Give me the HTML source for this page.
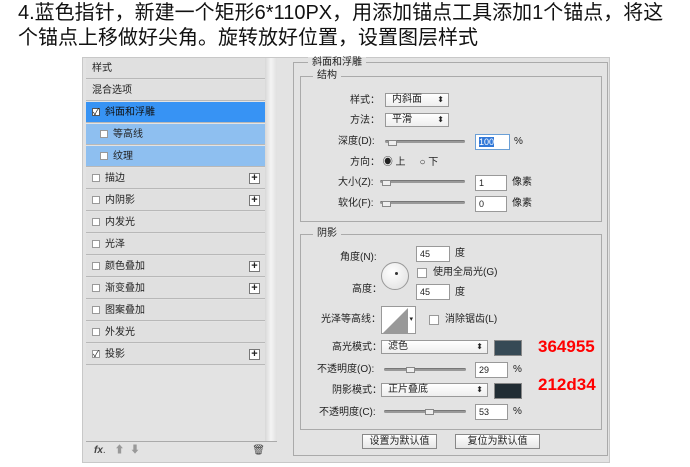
<!DOCTYPE html>
<html><head><meta charset="utf-8"><style>
*{margin:0;padding:0;box-sizing:border-box}
body{width:690px;height:467px;background:#fff;position:relative;overflow:hidden;font-family:"Liberation Sans","Noto Sans CJK SC",sans-serif;font-size:11px;color:#222}
.a{position:absolute;white-space:nowrap}
.h{font-size:20px;color:#111;line-height:22px}
.row{position:absolute;left:86px;width:179px;height:21px;border-bottom:1px solid #b8b8b8;background:#e0e0e0;line-height:21px;padding-left:6px;font-size:10px}
.cb{display:inline-block;width:8px;height:8px;border:1px solid #999;background:#fff;margin-right:5px;vertical-align:-1px;position:relative;overflow:visible}
.cb i{position:absolute;left:0;top:-2px;font-style:normal;font-size:9px;line-height:10px}
.plus{position:absolute;right:5px;top:5px;width:11px;height:11px;border:1px solid #777;background:#fff;font-size:11px;line-height:8px;text-align:center;font-weight:bold}
.box{position:absolute;border:1px solid #aaa}
.lg{position:absolute;background:#e3e3e3;padding:0 4px;font-size:10px;line-height:12px}
.sel{position:absolute;height:14px;border:1px solid #999;background:linear-gradient(#fff,#eee);font-size:10px;line-height:12px;padding-left:6px}
.sel:after{content:"⬍";position:absolute;right:4px;font-size:8px}
.in{position:absolute;height:16px;border:1px solid #999;background:#fff;font-size:9px;line-height:14px;padding-left:3px}
.sl{position:absolute;height:3px;background:#999;border-radius:2px;border-top:1px solid #777}
.k{position:absolute;width:9px;height:6px;background:#eee;border:1px solid #888}
.l{font-size:10px;line-height:12px}
</style></head><body>
<div class="a h" style="left:18px;top:2px">4.蓝色指针，新建一个矩形6*110PX，用添加锚点工具添加1个锚点，将这</div>
<div class="a h" style="left:18px;top:27px">个锚点上移做好尖角。旋转放好位置，设置图层样式</div>

<div class="a" style="left:82px;top:57px;width:528px;height:406px;background:#e3e3e3;border:1px solid #c8c8c8"></div>
<div class="a" style="left:265px;top:58px;width:12px;height:384px;background:linear-gradient(90deg,#d8d8d8,#f4f4f4,#e0e0e0)"></div>
<div class="row" style="top:58px">样式</div>
<div class="row" style="top:80px">混合选项</div>
<div class="row" style="top:102px;background:#3793f4;color:#111"><span class="cb" style="border-color:#555"><i>✓</i></span>斜面和浮雕</div>
<div class="row" style="top:124px;background:#8ebff0;padding-left:14px"><span class="cb"></span>等高线</div>
<div class="row" style="top:146px;background:#8ebff0;padding-left:14px"><span class="cb"></span>纹理</div>
<div class="row" style="top:168px"><span class="cb"></span>描边<span class="plus">+</span></div>
<div class="row" style="top:190px"><span class="cb"></span>内阴影<span class="plus">+</span></div>
<div class="row" style="top:212px"><span class="cb"></span>内发光</div>
<div class="row" style="top:234px"><span class="cb"></span>光泽</div>
<div class="row" style="top:256px"><span class="cb"></span>颜色叠加<span class="plus">+</span></div>
<div class="row" style="top:278px"><span class="cb"></span>渐变叠加<span class="plus">+</span></div>
<div class="row" style="top:300px"><span class="cb"></span>图案叠加</div>
<div class="row" style="top:322px"><span class="cb"></span>外发光</div>
<div class="row" style="top:344px"><span class="cb"><i>✓</i></span>投影<span class="plus">+</span></div>
<div class="a" style="left:86px;top:441px;width:191px;border-top:1px solid #aaa;height:18px;font-size:10px;line-height:17px;padding-left:8px;color:#444"><i><b>fx</b></i>. <span style="color:#999;margin-left:6px">⬆ &nbsp;⬇</span><span style="position:absolute;right:12px">🗑</span></div>

<div class="box" style="left:293px;top:62px;width:315px;height:394px"></div>
<div class="lg" style="left:308px;top:57px">斜面和浮雕</div>
<div class="box" style="left:300px;top:76px;width:302px;height:146px"></div>
<div class="lg" style="left:313px;top:70px">结构</div>
<div class="a l" style="left:350px;top:95px">样式：</div><div class="sel" style="left:385px;top:93px;width:64px">内斜面</div>
<div class="a l" style="left:350px;top:115px">方法：</div><div class="sel" style="left:385px;top:113px;width:64px">平滑</div>
<div class="a l" style="left:338px;top:136px">深度(D):</div><div class="sl" style="left:385px;top:140px;width:80px"></div><div class="k" style="left:388px;top:140px"></div>
<div class="in" style="left:475px;top:134px;width:35px;border-color:#6a9fd6"><span style="background:#3178d8;color:#fff">100</span></div><div class="a l" style="left:514px;top:136px">%</div>
<div class="a l" style="left:350px;top:157px">方向： ◉ 上 &nbsp;&nbsp;&nbsp;&nbsp;○ 下</div>
<div class="a l" style="left:338px;top:177px">大小(Z):</div><div class="sl" style="left:380px;top:180px;width:85px"></div><div class="k" style="left:382px;top:180px"></div>
<div class="in" style="left:475px;top:175px;width:32px">1</div><div class="a l" style="left:512px;top:177px">像素</div>
<div class="a l" style="left:338px;top:198px">软化(F):</div><div class="sl" style="left:380px;top:201px;width:85px"></div><div class="k" style="left:382px;top:201px"></div>
<div class="in" style="left:475px;top:196px;width:32px">0</div><div class="a l" style="left:512px;top:198px">像素</div>

<div class="box" style="left:300px;top:234px;width:302px;height:196px"></div>
<div class="lg" style="left:313px;top:228px">阴影</div>
<div class="a l" style="left:340px;top:252px">角度(N):</div>
<div class="a" style="left:381px;top:262px;width:28px;height:28px;border-radius:50%;border:1px solid #999;background:radial-gradient(circle at 40% 35%,#fff,#ddd)"></div>
<div class="a" style="left:395px;top:272px;width:3px;height:3px;background:#333;border-radius:50%"></div>
<div class="in" style="left:416px;top:246px;width:34px">45</div><div class="a l" style="left:455px;top:248px">度</div>
<div class="a" style="left:417px;top:268px;width:10px;height:10px;border:1px solid #999;background:#fff"></div><div class="a l" style="left:433px;top:267px">使用全局光(G)</div>
<div class="a l" style="left:352px;top:284px">高度：</div>
<div class="in" style="left:416px;top:284px;width:34px">45</div><div class="a l" style="left:455px;top:287px">度</div>
<div class="a l" style="left:321px;top:314px">光泽等高线：</div>
<div class="a" style="left:381px;top:306px;width:35px;height:28px;border:1px solid #999;background:#fff;overflow:hidden"><svg width="27" height="26"><polygon points="1,26 26,1 26,26" fill="#999"/></svg><span style="position:absolute;right:2px;top:8px;font-size:7px">▾</span></div>
<div class="a" style="left:429px;top:315px;width:10px;height:10px;border:1px solid #999;background:#fff"></div><div class="a l" style="left:445px;top:314px">消除锯齿(L)</div>
<div class="a l" style="left:332px;top:342px">高光模式：</div><div class="sel" style="left:381px;top:340px;width:107px">滤色</div>
<div class="a" style="left:494px;top:340px;width:28px;height:16px;background:#364955;border:1px solid #888"></div>
<div class="a" style="left:538px;top:337px;color:#f00;font-weight:bold;font-size:17px">364955</div>
<div class="a l" style="left:317px;top:364px">不透明度(O):</div><div class="sl" style="left:384px;top:368px;width:82px"></div><div class="k" style="left:406px;top:367px"></div>
<div class="in" style="left:475px;top:362px;width:33px">29</div><div class="a l" style="left:513px;top:364px">%</div>
<div class="a l" style="left:332px;top:385px">阴影模式：</div><div class="sel" style="left:381px;top:383px;width:107px">正片叠底</div>
<div class="a" style="left:494px;top:383px;width:28px;height:16px;background:#212d34;border:1px solid #888"></div>
<div class="a" style="left:538px;top:375px;color:#f00;font-weight:bold;font-size:17px">212d34</div>
<div class="a l" style="left:319px;top:407px">不透明度(C):</div><div class="sl" style="left:384px;top:410px;width:82px"></div><div class="k" style="left:425px;top:409px"></div>
<div class="in" style="left:475px;top:404px;width:33px">53</div><div class="a l" style="left:513px;top:406px">%</div>

<div class="a l" style="left:362px;top:434px;width:75px;height:15px;border:1px solid #888;background:linear-gradient(#fff,#e6e6e6);text-align:center;line-height:13px">设置为默认值</div>
<div class="a l" style="left:455px;top:434px;width:85px;height:15px;border:1px solid #888;background:linear-gradient(#fff,#e6e6e6);text-align:center;line-height:13px">复位为默认值</div>
</body></html>
